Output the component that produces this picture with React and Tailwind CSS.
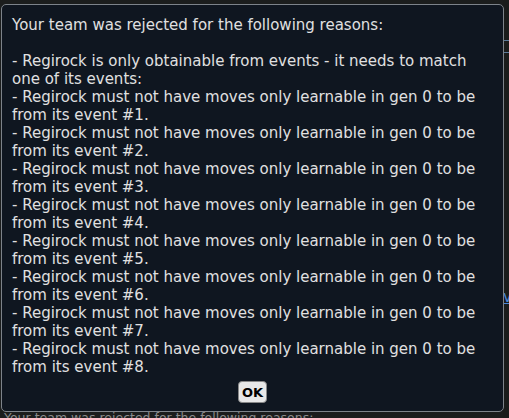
export default function App() {
  const lines = [
    "Your team was rejected for the following reasons:",
    "",
    "- Regirock is only obtainable from events - it needs to match",
    "one of its events:",
  ];
  for (let i = 1; i <= 8; i++) {
    lines.push("- Regirock must not have moves only learnable in gen 0 to be");
    lines.push(`from its event #${i}.`);
  }
  return (
    <div
      className="relative w-[509px] h-[418px] overflow-hidden bg-[#1b1d1d]"
      style={{ fontFamily: '"DejaVu Sans", Verdana, sans-serif' }}
    >
      {/* underlying page, laid out by flow */}
      <div className="flex h-full">
        <div className="flex-1 flex flex-col justify-end pl-[4px]">
          <div className="text-[12.5px] leading-[15px] h-[8px] overflow-visible text-[#8a8a8a] whitespace-nowrap">
            Your team was rejected for the following reasons:
          </div>
        </div>
        <div className="w-[6px] flex flex-col pt-[40px] bg-[#1a1c1b]">
          <div className="h-px bg-[#5b7a99]" />
          <div className="h-[11px]" />
          <div className="h-px bg-[#5b7a99]" />
          <div className="h-[236px]" />
          <div className="text-[15px] leading-[17px] text-[#4a86d8] underline whitespace-nowrap overflow-hidden">vi</div>
        </div>
      </div>

      {/* popup overlay */}
      <div className="absolute left-[1px] top-[4px] w-[503px] h-[408px] rounded-[5px] border border-[#7d838a] bg-[#0f1620] pt-[11px] px-[10px] flex flex-col">
        <div className="text-[15px] leading-[18px] text-[#e0e0e0] whitespace-pre">
          {lines.map((l, i) => (
            <div key={i} className="h-[18px]">{l}</div>
          ))}
        </div>
        <div className="flex justify-center mt-[5px]">
          <button className="h-[22px] w-[29px] rounded-[4px] border border-[#888] bg-[#e8e8e8] text-black text-[13px] font-bold leading-none">
            OK
          </button>
        </div>
      </div>
    </div>
  );
}
